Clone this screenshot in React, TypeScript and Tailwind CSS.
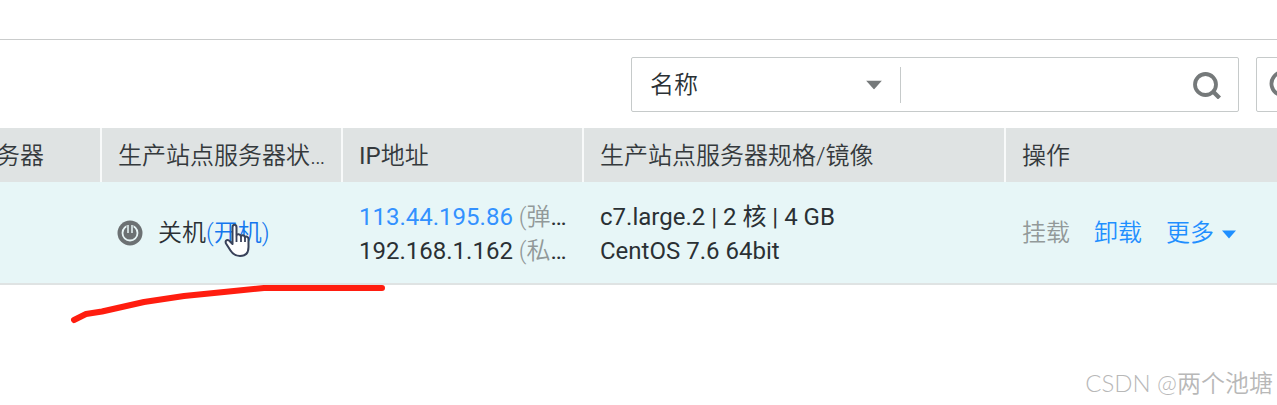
import { useState } from 'react'

interface Server {
  id: string
  status: string
  publicIp: string
  privateIp: string
  flavor: string
  image: string
}

const servers: Server[] = [
  {
    id: 'ecs-1',
    status: '关机',
    publicIp: '113.44.195.86',
    privateIp: '192.168.1.162',
    flavor: 'c7.large.2 | 2 核 | 4 GB',
    image: 'CentOS 7.6 64bit',
  },
]

function Caret({ className }: { className: string }) {
  return (
    <svg viewBox="0 0 16 9" className={className} fill="currentColor" aria-hidden="true">
      <path d="M0 0h16L8 9z" />
    </svg>
  )
}

function SearchIcon() {
  return (
    <svg viewBox="0 0 28 28" className="size-7" fill="none" stroke="#75797a" aria-hidden="true">
      <circle cx="12.5" cy="13.5" r="10.5" strokeWidth="3.8" />
      <path d="M20 20.5l6.5 6.5" strokeWidth="4.2" />
    </svg>
  )
}

function RefreshIcon() {
  return (
    <svg viewBox="0 0 28 28" className="size-7" fill="none" stroke="#75797a" strokeWidth="3.8" aria-hidden="true">
      <path d="M24 7A11.5 11.5 0 1 0 25.5 13" />
      <path d="M25 1v7h-7" />
    </svg>
  )
}

function PowerIcon() {
  return (
    <svg viewBox="0 0 26 26" className="size-[26px] shrink-0" fill="none" aria-hidden="true">
      <circle cx="13" cy="13" r="12.5" fill="#6c7173" />
      <circle cx="13" cy="13" r="7.5" stroke="#e8f6f7" strokeWidth="1.8" />
      <path d="M13 4v8" stroke="#6c7173" strokeWidth="7" />
      <path d="M11 5v8M15 5v8" stroke="#e8f6f7" strokeWidth="1.5" />
    </svg>
  )
}

function HandCursor() {
  return (
    <svg viewBox="0 0 26 34" className="absolute left-[224px] top-[223px] h-[34px] w-[26px]" aria-hidden="true">
      <path
        d="M8.5 21V4.5C8.5 .9 12.5 .9 12.5 4.5V12.5C13 10.7 16.5 10.7 17 13.5C17.5 11.5 20.6 11.7 21 14.5C21.5 13 24.5 13.3 24.5 16V24C24.5 30 21.5 33 16 33C11.5 33 9 31.5 6.5 27.5L2 20.5C.5 17 4 16 6 18.5Z"
        fill="#fff"
        stroke="#39425a"
        strokeWidth="2"
        strokeLinejoin="round"
      />
      <path d="M12.5 13v6M17 14v5M21 15v4" stroke="#39425a" strokeWidth="1.8" />
    </svg>
  )
}

function PenStroke() {
  return (
    <svg
      viewBox="0 0 320 44"
      className="absolute left-[70px] top-[282px] h-11 w-80"
      fill="none"
      stroke="#ff1d0f"
      strokeWidth="6"
      strokeLinecap="round"
      strokeLinejoin="round"
      aria-hidden="true"
    >
      <path d="M4 38L16 32L32 29.5L74 20L114 14L154 10L194 6H312" />
    </svg>
  )
}

const headCell = 'h-[54px] border-l-2 border-[#f8fafa] pt-0.5 pl-4 text-left font-[350] whitespace-nowrap'

export default function App() {
  const [field, setField] = useState('name')
  const [keyword, setKeyword] = useState('')

  return (
    <div className="relative overflow-hidden bg-white font-[Roboto,'Noto_Sans_CJK_SC',sans-serif] text-2xl text-[#2a3034]">
      <div className="h-10 border-b border-[#cacccc]" />

      {/* Toolbar */}
      <div className="flex justify-end gap-[17px] pt-[17px] pb-4">
        <form
          className="flex h-[55px] w-[608px] items-center rounded-xs border border-[#c6caca]"
          onSubmit={(e) => e.preventDefault()}
        >
          <div className="relative w-[268px]">
            <select
              aria-label="搜索字段"
              value={field}
              onChange={(e) => setField(e.target.value)}
              className="w-full appearance-none bg-transparent pl-[18px] font-[350] outline-none"
            >
              <option value="name">名称</option>
              <option value="ip">IP地址</option>
            </select>
            <Caret className="pointer-events-none absolute right-[18px] top-1/2 h-[9px] w-4 -translate-y-1/2 text-[#75797a]" />
          </div>
          <input
            aria-label="搜索"
            value={keyword}
            onChange={(e) => setKeyword(e.target.value)}
            className="h-9 min-w-0 flex-1 border-l border-[#c6caca] px-4 outline-none"
          />
          <button type="submit" aria-label="搜索" className="mr-[17px]">
            <SearchIcon />
          </button>
        </form>
        <button
          type="button"
          aria-label="刷新"
          className="-mr-[33px] flex h-[55px] w-[54px] items-center justify-center rounded-xs border border-[#c6caca]"
        >
          <RefreshIcon />
        </button>
      </div>

      <table className="w-full table-fixed border-collapse">
        <colgroup>
          <col className="w-[101px]" />
          <col className="w-[241px]" />
          <col className="w-[241px]" />
          <col className="w-[422px]" />
          <col />
        </colgroup>
        <thead className="bg-[#dfe3e3] text-[#34393c]">
          <tr>
            <th className="overflow-hidden pt-0.5 font-[350]">
              <div className="flex justify-end pr-14 whitespace-nowrap">务器</div>
            </th>
            <th className={headCell}>生产站点服务器状…</th>
            <th className={headCell}>
              <span className="font-normal">IP</span>地址
            </th>
            <th className={headCell}>生产站点服务器规格/镜像</th>
            <th className={headCell}>操作</th>
          </tr>
        </thead>
        <tbody>
          {servers.map((s) => (
            <tr key={s.id} className="h-[102px] border-b-2 border-[#dfe3e3] bg-[#e7f6f7]">
              <td />
              <td className="px-4">
                <div className="flex items-center whitespace-nowrap">
                  <PowerIcon />
                  <span className="ml-[15px] font-[350]">{s.status}</span>
                  <button type="button" className="font-[350] text-[#1476ee]">
                    (开机)
                  </button>
                </div>
              </td>
              <td className="pt-0.5 pl-[17px] leading-[34px] whitespace-nowrap">
                <div>
                  <a href="#eip" className="text-[#3391ff]">{s.publicIp}</a>
                  <span className="font-[350] text-[#929999]"> (弹</span>…
                </div>
                <div>
                  {s.privateIp}
                  <span className="font-[350] text-[#929999]"> (私</span>…
                </div>
              </td>
              <td className="pt-0.5 pl-[17px] leading-[34px] whitespace-nowrap">
                <div>
                  {s.flavor}
                </div>
                <div>{s.image}</div>
              </td>
              <td className="pl-[17px]">
                <div className="flex items-center gap-6 font-[350] whitespace-nowrap">
                  <button type="button" disabled className="text-[#929999]">
                    挂载
                  </button>
                  <button type="button" className="text-[#1f8fff]">
                    卸载
                  </button>
                  <button type="button" className="flex items-center gap-2 text-[#1f8fff]">
                    更多
                    <Caret className="mt-1 h-[9px] w-[14px]" />
                  </button>
                </div>
              </td>
            </tr>
          ))}
        </tbody>
      </table>

      <footer className="flex justify-end pt-[82px] pr-1 font-[Lato,'Noto_Sans_CJK_SC',sans-serif] font-[350] text-[#b8b8b8]">
        CSDN @两个池塘
      </footer>

      <HandCursor />
      <PenStroke />
    </div>
  )
}
